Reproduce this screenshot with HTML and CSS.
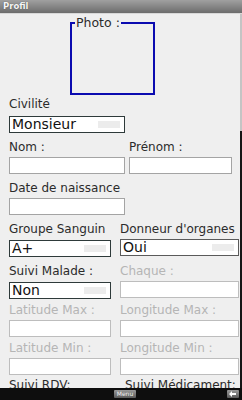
FILE: index.html
```html
<!DOCTYPE html>
<html lang="fr">
  <head>
    <meta charset="UTF-8" />
    <meta name="viewport" content="width=device-width, initial-scale=1.0" />
    <title>Profil</title>
    <link rel="stylesheet" href="styles.css">
  </head>
  <body>
    <div class="screen">
      <header class="title-bar">Profil</header>
      <div class="main">
        <form class="profile-form">
          <fieldset class="photo">
            <legend>Photo :</legend>
          </fieldset>

          <div class="field civ">
            <label>Civilité</label>
            <div class="select wide"><span>Monsieur</span><i class="ghost"></i></div>
          </div>

          <div class="row row-a">
            <div class="field">
              <label for="nom">Nom :</label>
              <input type="text" id="nom" />
            </div>
            <div class="field">
              <label for="prenom">Prénom :</label>
              <input type="text" id="prenom" />
            </div>
          </div>

          <div class="field single">
            <label for="naissance">Date de naissance</label>
            <input type="text" id="naissance" />
          </div>

          <div class="row row-b">
            <div class="field">
              <label>Groupe Sanguin</label>
              <div class="select"><span>A+</span><i class="ghost"></i></div>
            </div>
            <div class="field">
              <label>Donneur d'organes</label>
              <div class="select light"><span>Oui</span><i class="ghost"></i></div>
            </div>
          </div>

          <div class="row row-b tight">
            <div class="field">
              <label>Suivi Malade :</label>
              <div class="select"><span>Non</span><i class="ghost"></i></div>
            </div>
            <div class="field off">
              <label>Chaque :</label>
              <input type="text" disabled />
            </div>
          </div>

          <div class="row row-b tight">
            <div class="field off">
              <label>Latitude Max :</label>
              <input type="text" disabled />
            </div>
            <div class="field off">
              <label>Longitude Max :</label>
              <input type="text" disabled />
            </div>
          </div>

          <div class="row row-b last-gap">
            <div class="field off">
              <label>Latitude Min :</label>
              <input type="text" disabled />
            </div>
            <div class="field off">
              <label>Longitude Min :</label>
              <input type="text" disabled />
            </div>
          </div>

          <div class="row row-b last">
            <div class="field">
              <label>Suivi RDV:</label>
            </div>
            <div class="field shift">
              <label>Suivi Médicament:</label>
            </div>
          </div>
        </form>
        <div class="scrollbar"><span class="thumb"></span></div>
      </div>
      <footer class="soft-keys">
        <button class="key menu" type="button">Menu</button>
        <button class="key back" type="button">
          <svg width="8" height="6" viewBox="0 0 8 6">
            <path d="M0 3 L3 0 L3 2 L7 2 L7 4 L3 4 L3 6 Z" fill="#fff" />
          </svg>
        </button>
      </footer>
    </div>
  </body>
</html>
```

FILE: styles.css
```css
* {
  box-sizing: border-box;
}
body {
  margin: 0;
  background-color: #111;
  font-family: "DejaVu Sans", Verdana, sans-serif;
}
.screen {
  width: 242px;
  height: 400px;
  display: flex;
  flex-direction: column;
  overflow: hidden;
}
.title-bar {
  height: 14px;
  padding: 1px 0 0 3px;
  background: linear-gradient(#a0a0a0, #6c6c6c);
  border-bottom: 1px solid #d8d8d8;
  color: #f4f4f4;
  font-size: 8.5px;
  font-weight: bold;
  line-height: 11px;
  text-shadow: 0 0 1px #444;
}
.main {
  flex: 1;
  display: flex;
  background-color: #efefef;
  overflow: hidden;
}
.profile-form {
  flex: 1;
  padding: 0 0 0 9px;
  color: #2b2b2b;
  font-size: 12px;
}
.scrollbar {
  width: 2px;
  display: flex;
  flex-direction: column;
  background-color: #c4c4c4;
  padding-top: 117px;
}
.scrollbar .thumb {
  flex: 1;
  background-color: #151515;
}

/* photo box */
.photo {
  width: 85px;
  height: 80px;
  margin: 1px 0 0 61px;
  padding: 0 3px;
  border: 2px solid #0b0bb0;
}
.photo legend {
  padding: 0 1px;
  font-size: 12.5px;
  line-height: 15px;
  color: #2b2b2b;
}

/* fields */
.field label {
  display: block;
  height: 15px;
  line-height: 15px;
  margin-bottom: 2px;
  white-space: nowrap;
}
.field input {
  display: block;
  width: 100%;
  height: 17px;
  margin: 0;
  padding: 0 2px;
  border: 1px solid #a4a4a4;
  border-radius: 0;
  background-color: #fff;
  font: 14px "DejaVu Sans", sans-serif;
}
.field.off label {
  color: #b5b5b5;
}
.field.off input {
  border-color: #bdbdbd;
}
.field.shift label {
  padding-left: 5px;
}
.select {
  position: relative;
  height: 17px;
  padding: 0 2px;
  border: 1px solid #2e3a3a;
  background-color: #fff;
  color: #111;
  font-size: 14px;
  line-height: 15px;
}
.select.light {
  border-color: #5a5a5a;
}
.select .ghost {
  position: absolute;
  right: 4px;
  top: 4px;
  width: 22px;
  height: 7px;
  background-color: #ececec;
}
.civ {
  width: 116px;
  margin: 2px 0 7px;
}
.civ label {
  margin-bottom: 4px;
}
.single {
  width: 116px;
  margin-bottom: 7px;
}
.row {
  display: grid;
  margin-bottom: 7px;
}
.row-a {
  grid-template-columns: 116px 103px;
  column-gap: 4px;
}
.row-b {
  grid-template-columns: 102px 119px;
  column-gap: 9px;
}
.row-b .field:first-child label {
  margin-bottom: 3px;
}
.row-b .field.off:first-child label {
  margin-bottom: 2px;
}
.row.tight {
  margin-bottom: 4px;
}
.row.last-gap {
  margin-bottom: 3px;
}
.row.last .field label {
  margin-bottom: 0;
}

/* bottom soft keys */
.soft-keys {
  height: 12px;
  display: flex;
  align-items: center;
  padding: 0 3px 0 114px;
  background-color: #0e0e0e;
}
.key {
  height: 8px;
  padding: 0;
  border: none;
  border-radius: 1px;
  background: linear-gradient(#9a9a9a, #5a5a5a);
  color: #f0f0f0;
  font: 6px "DejaVu Sans", sans-serif;
  line-height: 8px;
  cursor: pointer;
}
.key.menu {
  width: 22px;
}
.key.back {
  width: 12px;
  margin-left: auto;
  display: flex;
  align-items: center;
  justify-content: center;
}
```
